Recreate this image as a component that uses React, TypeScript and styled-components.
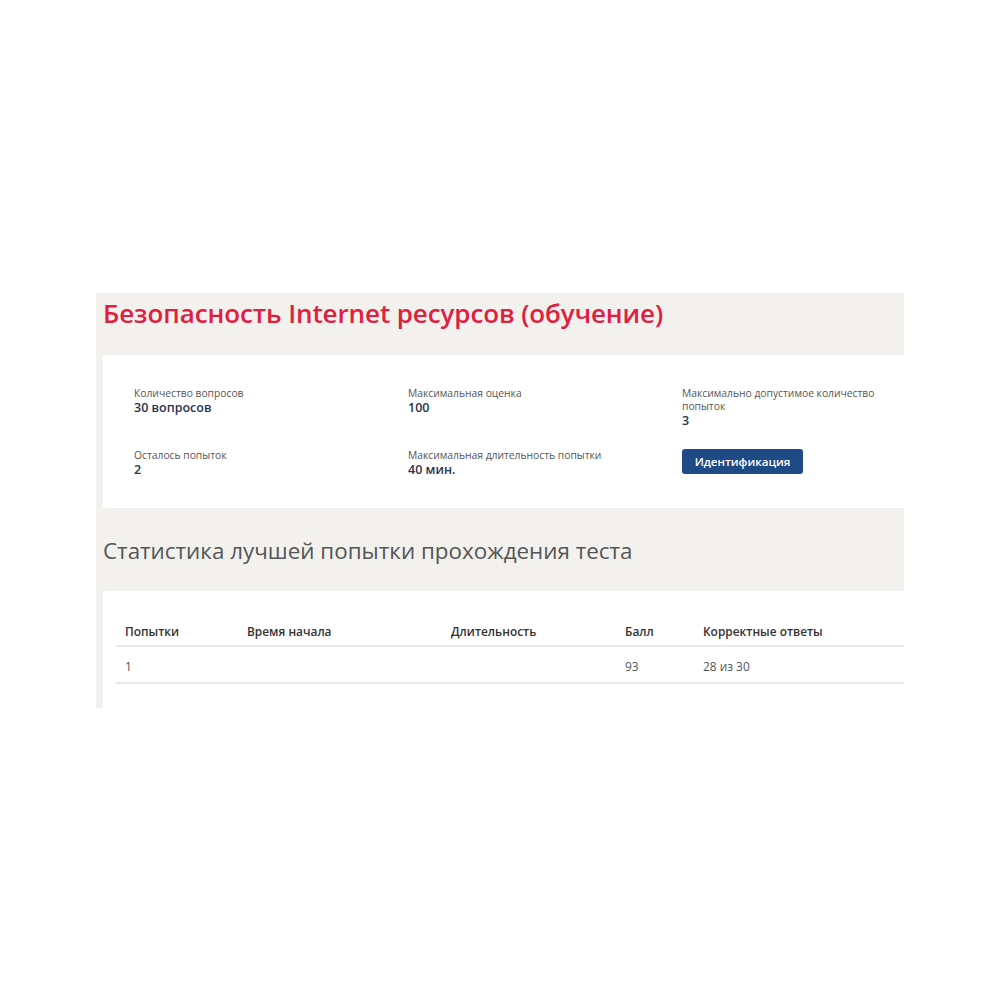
import React from "react";
import styled, { createGlobalStyle } from "styled-components";

const Global = createGlobalStyle`
  html, body { margin: 0; padding: 0; background: #ffffff; }
  body { font-family: "Open Sans", "Noto Sans", sans-serif; }
`;

const Frame = styled.div`
  margin: 293px 0 0 96px;
  width: 808px;
  height: 415px;
  background: #f2f1ee;
  overflow: hidden;
  padding-left: 7px;
  box-sizing: border-box;
`;

const Title = styled.h1`
  margin: 0;
  padding: 3px 0 0 0;
  height: 62px;
  box-sizing: border-box;
  font-family: "Open Sans", sans-serif;
  font-weight: 600;
  font-size: 26px;
  letter-spacing: -0.1px;
  line-height: 34px;
  color: #e0203f;
  white-space: nowrap;
`;

const Card = styled.div<{ $pt: number; $pb: number }>`
  background: #ffffff;
  border-radius: 3px 0 0 3px;
  padding: ${(p) => p.$pt}px 0 ${(p) => p.$pb}px 0;
  box-sizing: border-box;
`;

const InfoGrid = styled.div`
  display: grid;
  grid-template-columns: 274px 274px 210px;
  row-gap: 21px;
  padding-left: 31px;
  align-items: start;
`;

const Field = styled.div`
  display: flex;
  flex-direction: column;
`;

const Label = styled.span`
  font-size: 10.3px;
  line-height: 13px;
  color: #555555;
`;

const Value = styled.span`
  font-size: 12.5px;
  line-height: 15px;
  font-weight: 600;
  color: #28334f;
`;

const Button = styled.button`
  width: 121px;
  height: 25px;
  border: none;
  border-radius: 3px;
  background: #1f4a86;
  color: #ffffff;
  font-family: "Open Sans", sans-serif;
  font-size: 11.5px;
  font-weight: 600;
  padding: 0;
  cursor: pointer;
`;

const Subtitle = styled.h2`
  margin: 0;
  height: 83px;
  padding-top: 28px;
  box-sizing: border-box;
  font-family: "Open Sans", sans-serif;
  font-weight: 400;
  font-size: 22.4px;
  line-height: 30px;
  color: #555555;
  white-space: nowrap;
`;

const Table = styled.table`
  margin-left: 13px;
  width: calc(100% - 13px);
  border-collapse: collapse;
  font-size: 11.9px;
  line-height: 20px;
`;

const Th = styled.th<{ $w?: number }>`
  text-align: left;
  font-weight: 600;
  color: #333333;
  padding: 9px 9px 4px 9px;
  border-bottom: 2px solid #e9e9e9;
  width: ${(p) => (p.$w ? `${p.$w}px` : "auto")};
  box-sizing: border-box;
`;

const Td = styled.td`
  text-align: left;
  color: #555555;
  padding: 9px 9px 6px 9px;
  border-bottom: 2px solid #e9e9e9;
`;

const columns = [
  { title: "Попытки", w: 122 },
  { title: "Время начала", w: 204 },
  { title: "Длительность", w: 174 },
  { title: "Балл", w: 78 },
  { title: "Корректные ответы" },
];

const row = ["1", "", "", "93", "28 из 30"];

export default function App() {
  return (
    <>
      <Global />
      <Frame>
        <Title>Безопасность Internet ресурсов (обучение)</Title>
        <Card $pt={32} $pb={31}>
          <InfoGrid>
            <Field>
              <Label>Количество вопросов</Label>
              <Value>30 вопросов</Value>
            </Field>
            <Field>
              <Label>Максимальная оценка</Label>
              <Value>100</Value>
            </Field>
            <Field>
              <Label>Максимально допустимое количество попыток</Label>
              <Value>3</Value>
            </Field>
            <Field>
              <Label>Осталось попыток</Label>
              <Value>2</Value>
            </Field>
            <Field>
              <Label>Максимальная длительность попытки</Label>
              <Value>40 мин.</Value>
            </Field>
            <Field>
              <Button>Идентификация</Button>
            </Field>
          </InfoGrid>
        </Card>
        <Subtitle>Статистика лучшей попытки прохождения теста</Subtitle>
        <Card $pt={21} $pb={40}>
          <Table>
            <thead>
              <tr>
                {columns.map((c) => (
                  <Th key={c.title} $w={c.w}>
                    {c.title}
                  </Th>
                ))}
              </tr>
            </thead>
            <tbody>
              <tr>
                {row.map((v, i) => (
                  <Td key={i}>{v}</Td>
                ))}
              </tr>
            </tbody>
          </Table>
        </Card>
      </Frame>
    </>
  );
}
